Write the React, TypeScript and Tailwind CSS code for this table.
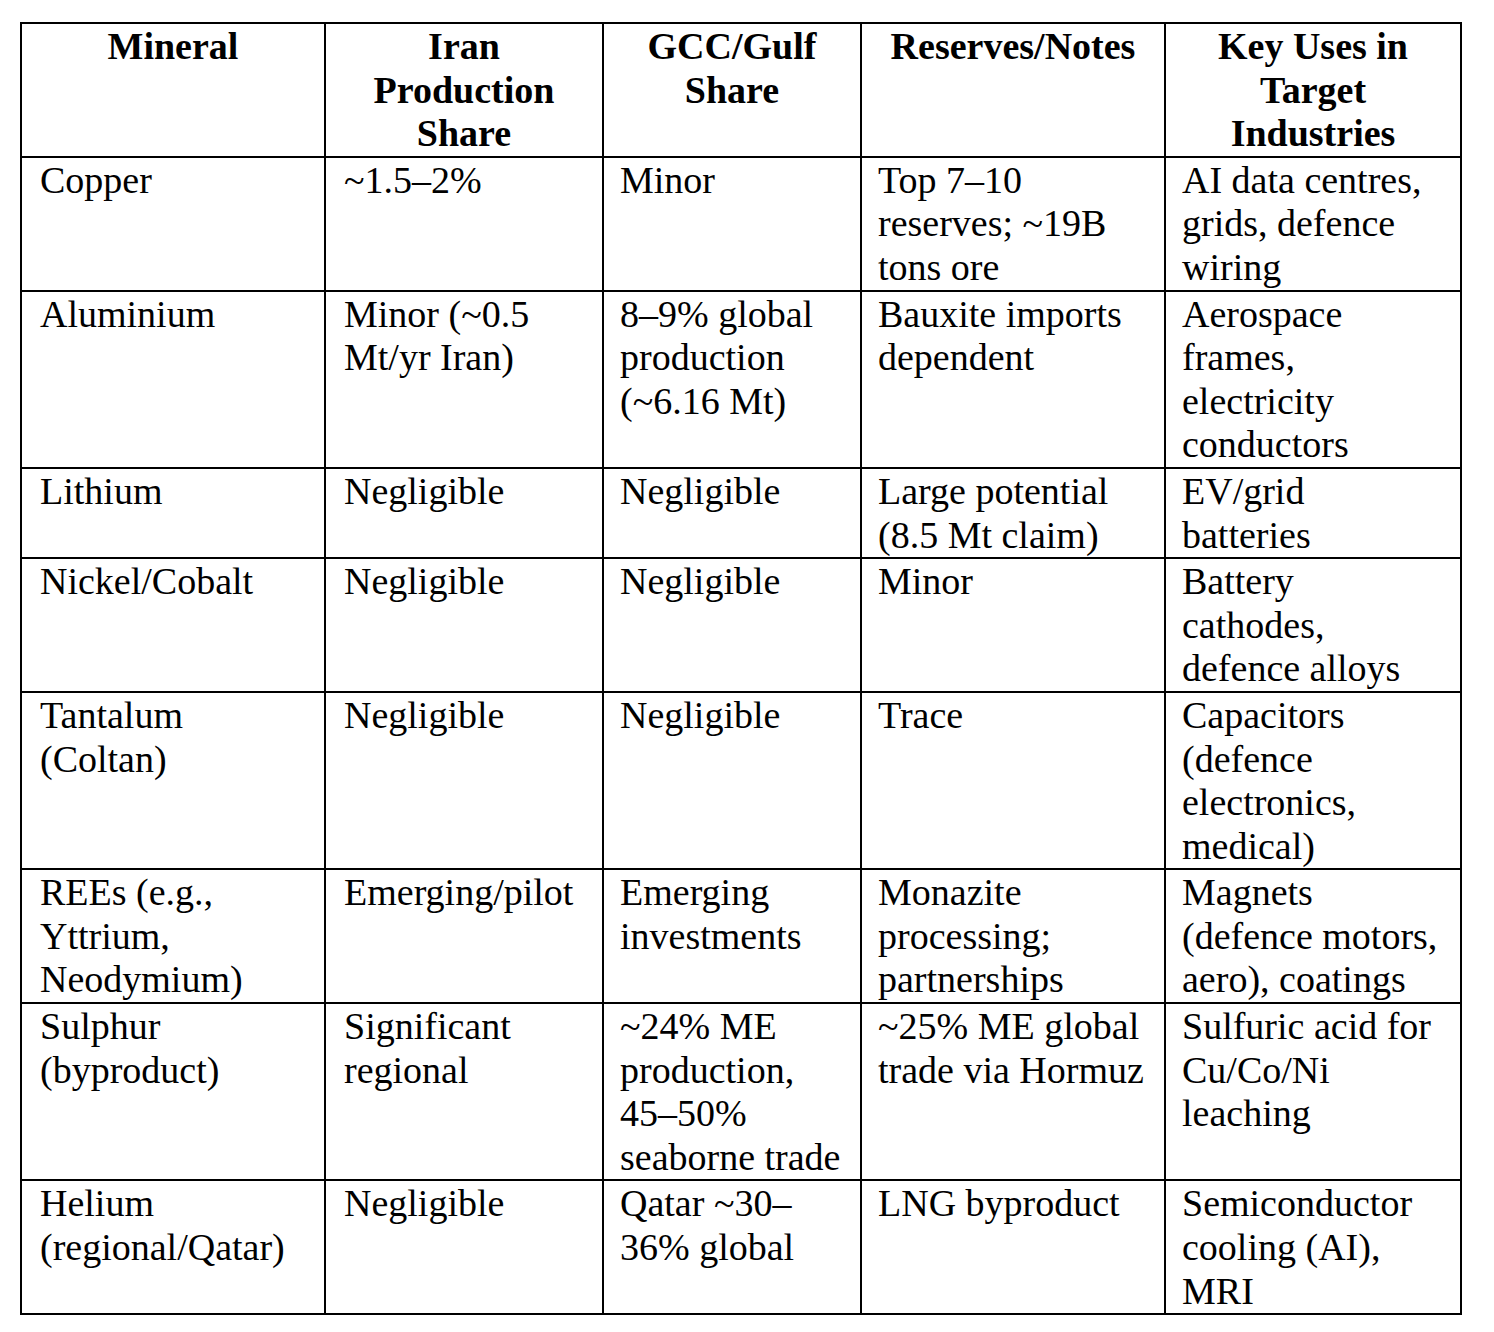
const HEADERS: string[][] = [
  ["Mineral"],
  ["Iran", "Production", "Share"],
  ["GCC/Gulf", "Share"],
  ["Reserves/Notes"],
  ["Key Uses in", "Target", "Industries"],
];

const ROWS: string[][][] = [
  [
    ["Copper"],
    ["~1.5–2%"],
    ["Minor"],
    ["Top 7–10", "reserves; ~19B", "tons ore"],
    ["AI data centres,", "grids, defence", "wiring"],
  ],
  [
    ["Aluminium"],
    ["Minor (~0.5", "Mt/yr Iran)"],
    ["8–9% global", "production", "(~6.16 Mt)"],
    ["Bauxite imports", "dependent"],
    ["Aerospace", "frames,", "electricity", "conductors"],
  ],
  [
    ["Lithium"],
    ["Negligible"],
    ["Negligible"],
    ["Large potential", "(8.5 Mt claim)"],
    ["EV/grid", "batteries"],
  ],
  [
    ["Nickel/Cobalt"],
    ["Negligible"],
    ["Negligible"],
    ["Minor"],
    ["Battery", "cathodes,", "defence alloys"],
  ],
  [
    ["Tantalum", "(Coltan)"],
    ["Negligible"],
    ["Negligible"],
    ["Trace"],
    ["Capacitors", "(defence", "electronics,", "medical)"],
  ],
  [
    ["REEs (e.g.,", "Yttrium,", "Neodymium)"],
    ["Emerging/pilot"],
    ["Emerging", "investments"],
    ["Monazite", "processing;", "partnerships"],
    ["Magnets", "(defence motors,", "aero), coatings"],
  ],
  [
    ["Sulphur", "(byproduct)"],
    ["Significant", "regional"],
    ["~24% ME", "production,", "45–50%", "seaborne trade"],
    ["~25% ME global", "trade via Hormuz"],
    ["Sulfuric acid for", "Cu/Co/Ni", "leaching"],
  ],
  [
    ["Helium", "(regional/Qatar)"],
    ["Negligible"],
    ["Qatar ~30–", "36% global"],
    ["LNG byproduct"],
    ["Semiconductor", "cooling (AI),", "MRI"],
  ],
];

function Lines({ lines }: { lines: string[] }) {
  return (
    <>
      {lines.map((l, i) => (
        <div key={i} className="whitespace-nowrap">
          {l}
        </div>
      ))}
    </>
  );
}

export default function App() {
  return (
    <div className="min-h-[1332px] w-[1494px] bg-white pl-[20px] pt-[22px] text-black font-['Liberation_Serif','Times_New_Roman',serif] text-[38px] leading-[43.6px]">
      <div className="grid w-[1442px] grid-cols-[304px_278px_258px_304px_296px] border-l-2 border-t-2 border-black">
        {HEADERS.map((h, i) => (
          <div
            key={"h" + i}
            className="border-b-2 border-r-2 border-black px-[16px] pt-[1px] text-center font-bold"
          >
            <Lines lines={h} />
          </div>
        ))}
        {ROWS.map((row, r) =>
          row.map((cell, c) => (
            <div
              key={r + "-" + c}
              className={
                c === 1
                  ? "border-b-2 border-r-2 border-black pl-[18px] pr-[10px] pt-[1px]"
                  : c === 0
                  ? "border-b-2 border-r-2 border-black pl-[18px] pr-[10px] pt-[1px]"
                  : "border-b-2 border-r-2 border-black pl-[16px] pr-[8px] pt-[1px]"
              }
            >
              <Lines lines={cell} />
            </div>
          ))
        )}
      </div>
    </div>
  );
}
